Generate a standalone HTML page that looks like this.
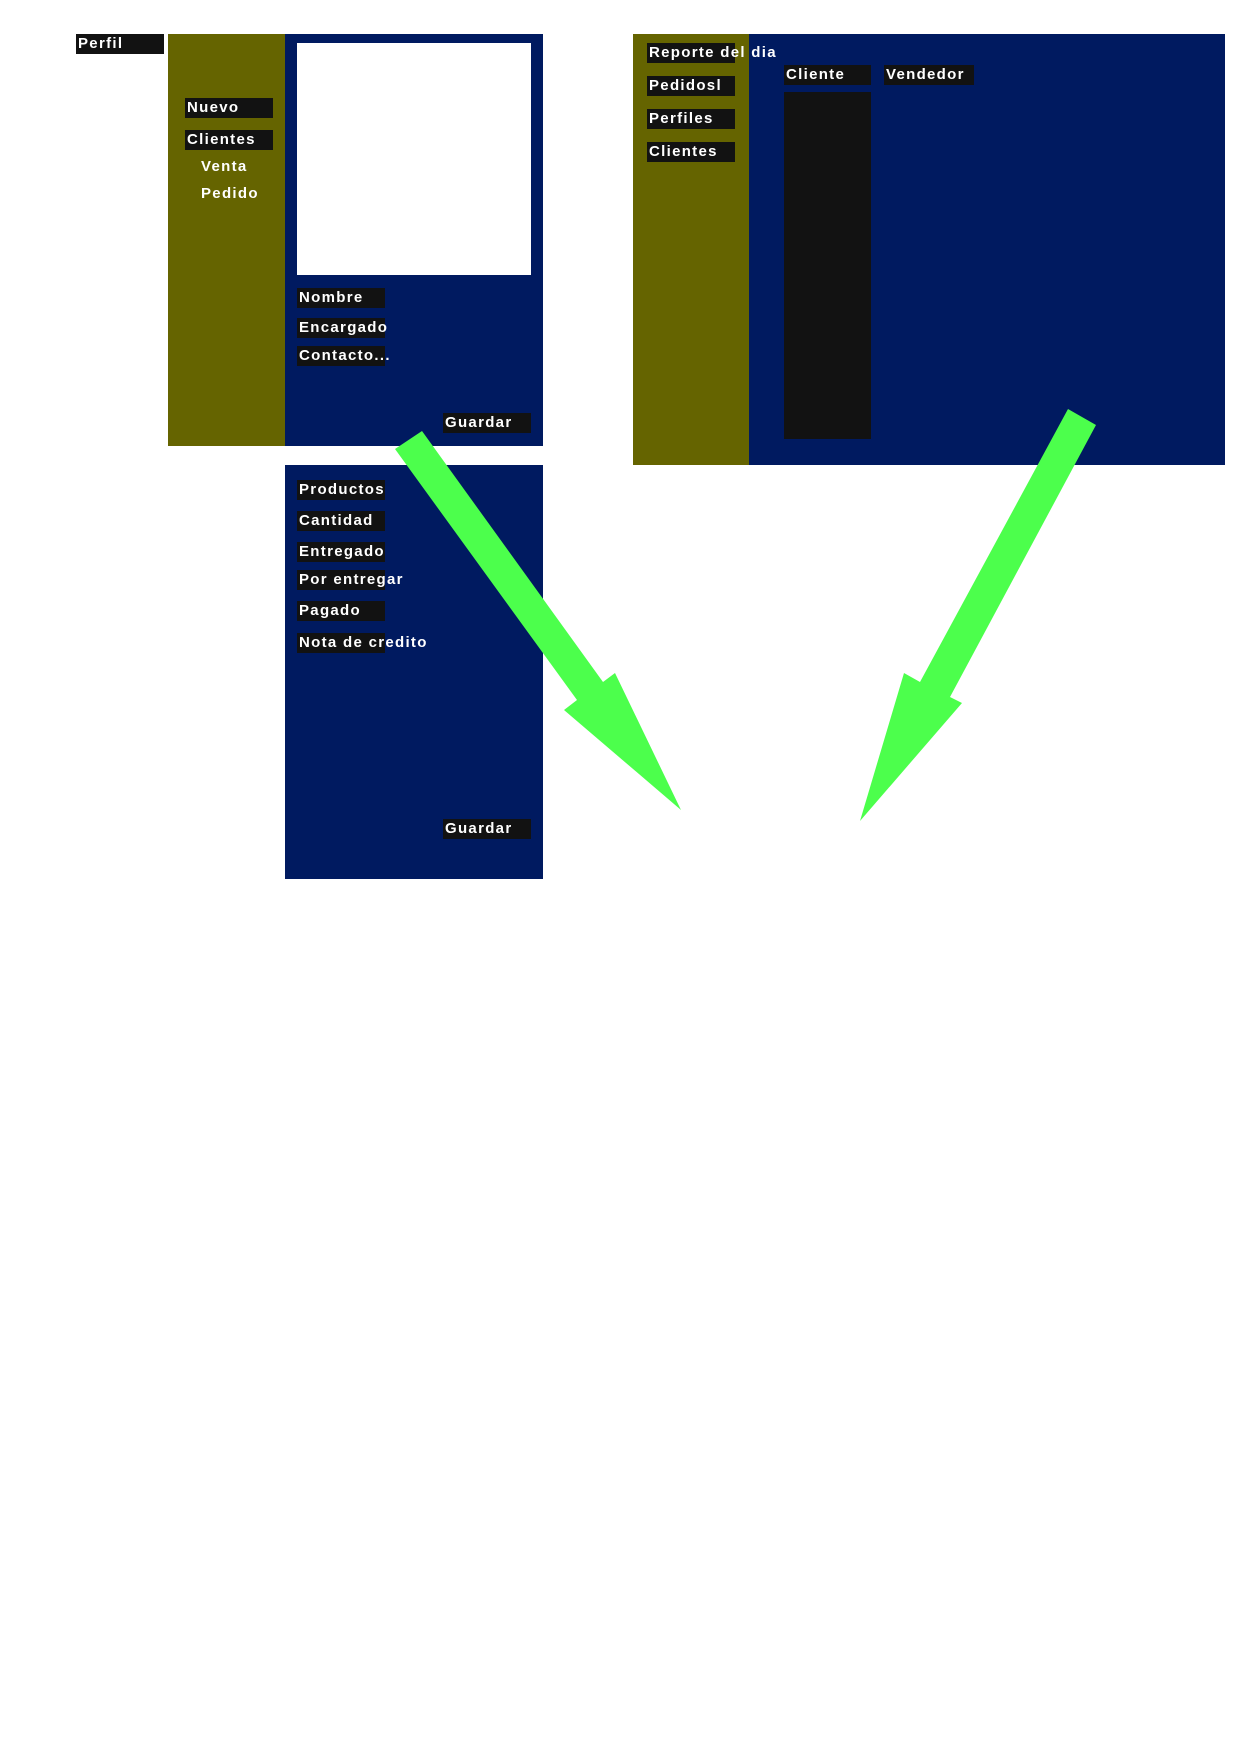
<!DOCTYPE html>
<html><head><meta charset="utf-8"><style>
body{margin:0;width:1245px;height:1755px;background:#fff;position:relative;overflow:hidden;font-family:"Liberation Sans",sans-serif;}
div{position:absolute;}
.o{background:#656400;}
.b{background:#001a60;}
.k{background:#121212;height:20px;}
.t{color:#fff;font-weight:bold;font-size:15px;letter-spacing:1.3px;white-space:nowrap;line-height:20px;padding-left:2px;}
</style></head><body>
<div class="k t" style="left:76px;top:34px;width:86px;">Perfil</div>
<div class="o" style="left:168px;top:34px;width:117px;height:412px;"></div>
<div class="b" style="left:285px;top:34px;width:258px;height:412px;"></div>
<div style="left:297px;top:43px;width:234px;height:232px;background:#fff;"></div>
<div class="k t" style="left:185px;top:98px;width:86px;">Nuevo</div>
<div class="k t" style="left:185px;top:130px;width:86px;">Clientes</div>
<div class="t" style="left:199px;top:157px;">Venta</div>
<div class="t" style="left:199px;top:184px;">Pedido</div>
<div class="k t" style="left:297px;top:288px;width:86px;">Nombre</div>
<div class="k t" style="left:297px;top:318px;width:86px;">Encargado</div>
<div class="k t" style="left:297px;top:346px;width:86px;">Contacto...</div>
<div class="k t" style="left:443px;top:413px;width:86px;">Guardar</div>

<div class="b" style="left:285px;top:465px;width:258px;height:414px;"></div>
<div class="k t" style="left:297px;top:480px;width:86px;">Productos</div>
<div class="k t" style="left:297px;top:511px;width:86px;">Cantidad</div>
<div class="k t" style="left:297px;top:542px;width:86px;">Entregado</div>
<div class="k t" style="left:297px;top:570px;width:86px;">Por entregar</div>
<div class="k t" style="left:297px;top:601px;width:86px;">Pagado</div>
<div class="k t" style="left:297px;top:633px;width:86px;">Nota de credito</div>
<div class="k t" style="left:443px;top:819px;width:86px;">Guardar</div>

<div class="o" style="left:633px;top:34px;width:116px;height:431px;"></div>
<div class="b" style="left:749px;top:34px;width:476px;height:431px;"></div>
<div class="k t" style="left:647px;top:43px;width:86px;">Reporte del dia</div>
<div class="k t" style="left:647px;top:76px;width:86px;">Pedidosl</div>
<div class="k t" style="left:647px;top:109px;width:86px;">Perfiles</div>
<div class="k t" style="left:647px;top:142px;width:86px;">Clientes</div>
<div class="k t" style="left:784px;top:65px;width:85px;">Cliente</div>
<div class="k t" style="left:884px;top:65px;width:88px;">Vendedor</div>
<div style="left:784px;top:92px;width:87px;height:347px;background:#121212;"></div>

<svg style="position:absolute;left:0;top:0" width="1245" height="1755">
<polygon fill="#4cff4c" points="395,449 422,431 603,682 615,673 681,810 564,710 577,700"/>
<polygon fill="#4cff4c" points="1068,409 1096,425 950,697 962,703 860,821 904,673 920,682"/>
</svg>
</body></html>
